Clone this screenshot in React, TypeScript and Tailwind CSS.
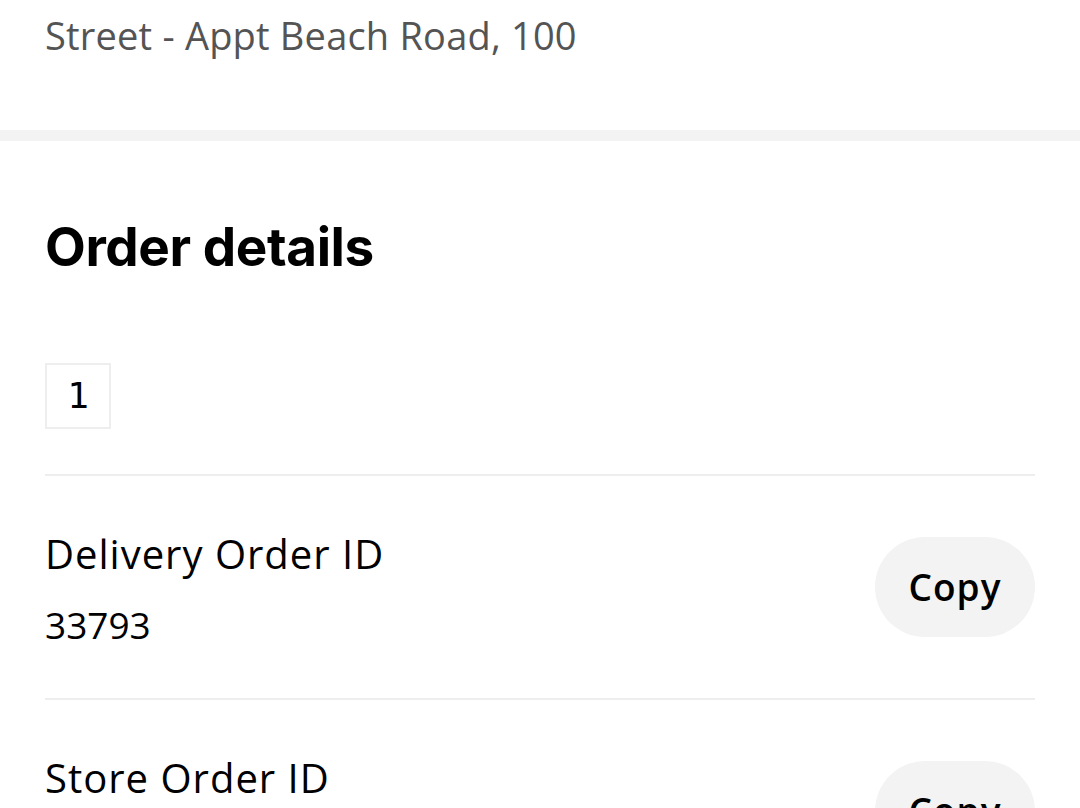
export default function App() {
  const rows = [
    { label: 'Delivery Order ID', value: '33793' },
    { label: 'Store Order ID', value: '33793' },
  ];

  return (
    <div className="h-[808px] overflow-hidden bg-white font-['Open_Sans',sans-serif] text-black">
      {/* Address block (scrolled) */}
      <div className="px-[45px] pt-[11px] pb-[71px]">
        <p className="text-[38px] leading-[48px] text-[#545454] tracking-[0.2px]">Street - Appt Beach Road, 100</p>
      </div>
      <div className="h-[11px] bg-[#f3f3f3]" />

      <div className="px-[45px]">
        <h2 className="pt-[74px] text-[53px] leading-[64px] font-bold tracking-[-0.4px] font-['Inter',sans-serif]">
          Order details
        </h2>

        <div className="pt-[84px] pb-[45px] border-b-2 border-[#eeeeee]">
          <div className="w-[66px] h-[66px] border-2 border-[#eeeeee] flex items-center justify-center font-['DejaVu_Sans_Mono',monospace] text-[36px] leading-none">
            1
          </div>
        </div>

        {rows.map((row) => (
          <div key={row.label} className="flex items-start justify-between pt-[58px] pb-[53px] border-b-2 border-[#eeeeee]">
            <div className="flex flex-col">
              <span className="text-[40px] leading-[40px] tracking-[1px]">{row.label}</span>
              <span className="mt-[31px] text-[37px] leading-[40px]">{row.value}</span>
            </div>
            <button className="mt-[3px] w-[160px] h-[100px] rounded-full bg-[#f3f3f3] text-[37px] font-semibold tracking-[1px]">
              Copy
            </button>
          </div>
        ))}
      </div>
    </div>
  );
}
